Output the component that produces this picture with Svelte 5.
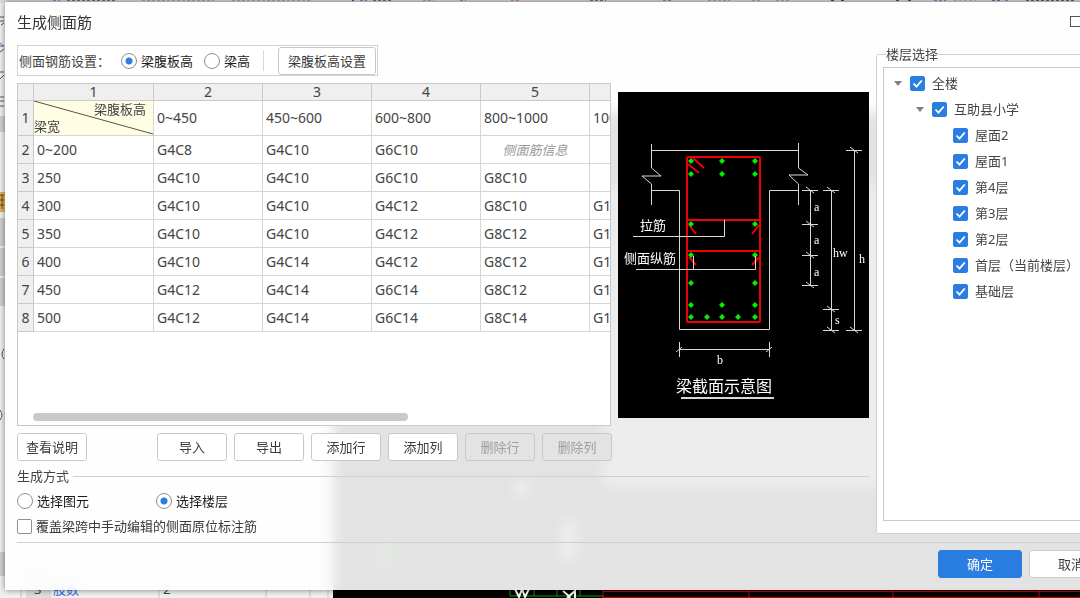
<script lang="ts">
  type Floor = { name: string; level: number; checked: boolean };

  const columns = ['1', '2', '3', '4', '5', '6'];
  const ranges = ['0~450', '450~600', '600~800', '800~1000', '1000~1200'];
  const rows = [
    { width: '0~200', cells: ['G4C8', 'G4C10', 'G6C10', '', ''] },
    { width: '250', cells: ['G4C10', 'G4C10', 'G6C10', 'G8C10', ''] },
    { width: '300', cells: ['G4C10', 'G4C10', 'G4C12', 'G8C10', 'G10C12'] },
    { width: '350', cells: ['G4C10', 'G4C10', 'G4C12', 'G8C12', 'G10C12'] },
    { width: '400', cells: ['G4C10', 'G4C14', 'G4C12', 'G8C12', 'G10C12'] },
    { width: '450', cells: ['G4C12', 'G4C14', 'G6C14', 'G8C12', 'G10C12'] },
    { width: '500', cells: ['G4C12', 'G4C14', 'G6C14', 'G8C14', 'G10C14'] },
  ];

  let floors: Floor[] = $state([
    { name: '全楼', level: 0, checked: true },
    { name: '互助县小学', level: 1, checked: true },
    { name: '屋面2', level: 2, checked: true },
    { name: '屋面1', level: 2, checked: true },
    { name: '第4层', level: 2, checked: true },
    { name: '第3层', level: 2, checked: true },
    { name: '第2层', level: 2, checked: true },
    { name: '首层（当前楼层）', level: 2, checked: true },
    { name: '基础层', level: 2, checked: true },
  ]);

  let heightMode = $state('web');
  let target = $state('floor');
  let override = $state(false);

  const bars = [
    [691, 161], [722, 161], [755, 161],
    [691, 174], [722, 174], [755, 174],
    [691, 224], [755, 224],
    [691, 255], [755, 255],
    [691, 283], [755, 283],
    [691, 305], [722, 305], [755, 305],
    [691, 317], [707, 317], [722, 317], [738, 317], [755, 317],
  ];

  // dimension line ends: x, y
  const ticks = [
    [810, 190], [810, 224], [810, 255], [810, 285],
    [831, 190], [831, 309], [831, 330],
    [854, 150], [854, 330],
  ];

  // toolbar slivers above the dialog: x, width, color
  const marks = [
    [53, 7, '#3a86e0'], [67, 50, '#555'], [142, 72, '#999'], [232, 78, '#999'], [352, 2, '#333'],
    [360, 7, '#3a86e0'], [373, 20, '#555'], [423, 11, '#6a9ddc'], [460, 6, '#3a86e0'], [511, 8, '#d66'],
    [590, 16, '#557'], [663, 8, '#777'], [708, 22, '#999'], [752, 10, '#999'], [776, 14, '#999'],
    [831, 3, '#224'], [841, 3, '#224'], [896, 3, '#333'], [908, 5, '#335'], [934, 12, '#3a86e0'],
    [954, 22, '#9db9dc'], [992, 8, '#557'], [1005, 3, '#3a86e0'], [1026, 50, '#444'],
  ];
</script>

<div class="screen">
  <svg class="workspace" aria-hidden="true">
    <rect width="100%" height="100%" fill="#f1f1f1" />
    <rect y="0" width="100%" height="3" fill="#dcdcdc" />
    {#each marks as [x, w, color]}
      <path d="M{x} 0.5h{w}" stroke={color} stroke-dasharray="3 2" opacity="0.8" />
    {/each}
    <rect y="116" width="5" height="16" fill="#d0d0d0" />
    <rect y="192" width="5" height="20" fill="#e5b25c" />
    <path d="M0 195h4M0 200h4M0 205h4M2 195v14" stroke="#6b4a12" fill="none" />
    <rect y="218" width="5" height="28" fill="#d0d0d0" />
    <rect y="248" width="5" height="28" fill="#d0d0d0" />
    <rect y="278" width="5" height="28" fill="#d0d0d0" />
    <path d="M0 17h4M0 21h4M1 25l3 -2M0 46h4M0 52l4 -3M0 72h4M0 79l4 -4M0 97h4M0 101h4M0 106h4" stroke="#555" fill="none" />
    <path d="M0 43l4 3" stroke="#2d7fe0" />
    <path d="M4 349q-4 5 0 10M0 410q4 5 0 10" stroke="#555" fill="none" />
    <rect y="552" width="5" height="24" fill="#d0d0d0" />
    <rect x="333" y="112" width="100%" height="100%" fill="#000" />
    <rect x="603" y="186" width="100%" height="302" fill="#5c5c5c" />
    <path d="M21 570v28M50 570v28M159 570v28M266 570v28M310 570v28M328 570v28" stroke="#c8c8c8" />
    <rect x="26" y="570" width="24" height="28" fill="#dedede" />
    <text x="34" y="594" fill="#444">3</text>
    <text x="53" y="594" fill="#2d6fe8">肢数</text>
    <text x="163" y="594" fill="#444">2</text>
    <path d="M510 590v6h94M534 590v6M557 590v6M580 590v6" stroke="#00a000" fill="none" />
    <path d="M515 589l4 8l3 -8l3 8l4 -8" stroke="#fff" stroke-width="2" fill="none" />
    <path d="M563 591q10 8 5 6l7 -6v7" stroke="#fff" stroke-width="2" fill="none" />
    <path d="M569 520v42M521 480v16" stroke="#777" stroke-width="14" />
    <path d="M386 545v26" stroke="#008000" stroke-width="8" />
    <path d="M603 591.5h480M603 597.5h480M603 590v8M749 590v8M893 590v8M1039 590v8" stroke="#c80000" fill="none" />
  </svg>

  <main class="dialog">
    <header class="titlebar">
      <h1>生成侧面筋</h1>
      <button class="window-btn" aria-label="最大化">
        <svg width="11" height="11"><rect x="0.5" y="0.5" width="10" height="10" fill="none" stroke="#555" /></svg>
      </button>
      <button class="window-btn" aria-label="关闭">
        <svg width="11" height="11"><path d="M0.5 0.5l10 10M10.5 0.5l-10 10" fill="none" stroke="#555" /></svg>
      </button>
    </header>

    <div class="body">
      <div class="left">
        <div class="settings">
          <span>侧面钢筋设置：</span>
          <label class="option"><input type="radio" name="height" value="web" bind:group={heightMode} />梁腹板高</label>
          <label class="option"><input type="radio" name="height" value="beam" bind:group={heightMode} />梁高</label>
          <i class="divider"></i>
          <button class="btn wide">梁腹板高设置</button>
        </div>

        <div class="sheet-row">
          <div class="sheet">
            <div class="sheet-view">
              <table>
                <colgroup>
                  <col class="col-index" />
                  <col class="col-first" />
                  {#each ranges as _}<col class="col-value" />{/each}
                </colgroup>
                <thead>
                  <tr>
                    <th></th>
                    {#each columns as c}<th scope="col">{c}</th>{/each}
                  </tr>
                </thead>
                <tbody>
                  <tr class="range-row">
                    <th scope="row">1</th>
                    <td class="corner">
                      <div class="corner-box">
                        <svg viewBox="0 0 119 34" preserveAspectRatio="none"><path d="M0 0L119 33" stroke="#55534a" /></svg>
                        <span class="corner-top">梁腹板高</span>
                        <span class="corner-bottom">梁宽</span>
                      </div>
                    </td>
                    {#each ranges as r}<td>{r}</td>{/each}
                  </tr>
                  {#each rows as row, i}
                    <tr>
                      <th scope="row">{i + 2}</th>
                      <td>{row.width}</td>
                      {#each row.cells as cell, j}
                        {#if i === 0 && j === 3}
                          <td class="hint">侧面筋信息</td>
                        {:else}
                          <td>{cell}</td>
                        {/if}
                      {/each}
                    </tr>
                  {/each}
                </tbody>
              </table>
            </div>
            <div class="scrollbar"><div class="thumb"></div></div>
          </div>

          <svg class="diagram" viewBox="618 92 251 326" role="img" aria-label="梁截面示意图">
            <g class="line">
              <path d="M651 150.5H798M651.5 144V168L661 176H642L651.5 184V205M798.5 143V168L808 175H789L798.5 184V205" />
              <path d="M651 190.5H679.5V329.5H769.5V190.5H798" />
              <path d="M810.5 190V286M831.5 190V330M854.5 150V330M679 349.5H769M679.5 342V357M769.5 342V357" />
              <path d="M676 352L682 347M766 352L772 347" />
              {#each ticks as [x, y]}
                <path d="M{x - 8} {y + 0.5}h16M{x - 4} {y - 3}l8 6" />
              {/each}
            </g>
            <g class="bar">
              <rect x="687" y="157" width="73" height="165" rx="1" />
              <path d="M687 220H760M687 251H760" />
              <path d="M688 164L699 173M693 158L704 168M689 225L696 234M759 225L752 234M689 257L696 265M759 257L752 265" />
            </g>
            {#each bars as [x, y]}
              <path class="dot" d="M{x - 3} {y}l3 -3l3 3l-3 3z" />
            {/each}
            <g class="line">
              <path d="M633 236.5H724.5V220M636 269.5H755.5V256M693.5 256V269" />
              <path d="M681 398H774" stroke-width="2" />
            </g>
            <text x="640" y="230">拉筋</text>
            <text x="624" y="263">侧面纵筋</text>
            <text class="caption" x="676" y="392">梁截面示意图</text>
            <g class="dim">
              <text x="814" y="211">a</text>
              <text x="814" y="244">a</text>
              <text x="814" y="276">a</text>
              <text x="833" y="257">hw</text>
              <text x="835" y="324">s</text>
              <text x="859" y="263">h</text>
              <text x="717" y="364">b</text>
            </g>
          </svg>
        </div>

        <div class="actions">
          <button class="btn help">查看说明</button>
          <button class="btn">导入</button>
          <button class="btn">导出</button>
          <button class="btn">添加行</button>
          <button class="btn">添加列</button>
          <button class="btn" disabled>删除行</button>
          <button class="btn" disabled>删除列</button>
        </div>

        <fieldset class="mode">
          <legend>生成方式</legend>
          <div class="mode-options">
            <label class="option"><input type="radio" name="target" value="element" bind:group={target} />选择图元</label>
            <label class="option"><input type="radio" name="target" value="floor" bind:group={target} />选择楼层</label>
          </div>
          <label class="option soft"><input type="checkbox" bind:checked={override} />覆盖梁跨中手动编辑的侧面原位标注筋</label>
        </fieldset>
      </div>

      <fieldset class="floors">
        <legend>楼层选择</legend>
        <ul class="tree">
          {#each floors as floor}
            <li class="level-{floor.level}">
              {#if floor.level < 2}
                <svg class="arrow" width="8" height="5"><path d="M0 0H8L4 5z" fill="#808080" /></svg>
              {/if}
              <label><input type="checkbox" bind:checked={floor.checked} />{floor.name}</label>
            </li>
          {/each}
        </ul>
      </fieldset>
    </div>

    <footer>
      <button class="btn ok">确定</button>
      <button class="btn cancel">取消</button>
    </footer>
  </main>
</div>

<style>
  :global(body) {
    margin: 0;
  }

  .screen {
    position: relative;
    box-sizing: border-box;
    min-height: 100vh;
    padding: 2px 0 8px 5px;
    overflow: hidden;
    font-family: 'Noto Sans', 'Noto Sans CJK SC', sans-serif;
    font-size: 13px;
    line-height: 18px;
    color: #444;
  }

  .workspace {
    position: absolute;
    top: 0;
    left: 0;
    width: 100%;
    height: 100%;
  }

  /* the dialog runs past the right edge of the screen */
  .dialog {
    position: relative;
    margin-right: -45px;
    padding: 0 12px;
    background: rgba(255, 255, 255, 0.89);
    backdrop-filter: blur(7px);
    box-shadow: 0 0 6px rgba(0, 0, 0, 0.5);
  }

  .titlebar {
    display: flex;
    align-items: center;
    gap: 21px;
    height: 39px;
    padding-bottom: 4px;
  }

  h1 {
    flex: 1;
    margin: 0;
    font-size: 15px;
    font-weight: 400;
    color: #333;
  }

  .window-btn {
    display: flex;
    padding: 0;
    border: none;
    background: none;
  }

  .body {
    display: flex;
    gap: 7px;
    padding-bottom: 7px;
  }

  .left {
    flex: 1;
    min-width: 0;
    display: flex;
    flex-direction: column;
    align-items: stretch;
  }

  fieldset {
    margin: 0;
    min-width: 0;
    border: 1px solid #d0d0d0;
  }

  legend {
    padding: 0;
  }

  .settings {
    display: flex;
    align-items: center;
    align-self: flex-start;
    box-sizing: border-box;
    height: 31px;
    margin-bottom: 7px;
    padding: 0 1px;
    border: 1px solid #d0d4d8;
    background: #fff;
  }

  .settings .option {
    margin-left: 11px;
  }

  .divider {
    width: 1px;
    height: 21px;
    margin: 0 14px 0 13px;
    background: #d8d8d8;
  }

  .option {
    display: flex;
    align-items: center;
    gap: 4px;
    color: #1c1c1c;
  }

  .option.soft {
    color: #3a3a3a;
  }

  input {
    appearance: none;
    flex: none;
    box-sizing: border-box;
    width: 15px;
    height: 15px;
    margin: 0;
    border: 1px solid #8f8f8f;
    border-radius: 2px;
    background: #fff;
  }

  input[type='radio'] {
    width: 16px;
    height: 16px;
    border-radius: 50%;
  }

  input[type='radio']:checked {
    background: radial-gradient(circle, #2a7de1 3px, #fff 4px);
  }

  input[type='checkbox']:checked {
    border-color: #2a7de1;
    background: #2a7de1
      url("data:image/svg+xml,%3Csvg xmlns='http://www.w3.org/2000/svg' viewBox='0 0 13 13'%3E%3Cpath d='M2.5 6.5l3 3.2L10.8 3.5' fill='none' stroke='white' stroke-width='1.8'/%3E%3C/svg%3E");
  }

  .btn {
    box-sizing: border-box;
    width: 70px;
    height: 28px;
    padding: 0;
    border: 1px solid #c9c9c9;
    border-radius: 3px;
    background: #fff;
    font: inherit;
    color: #3c3c3c;
    white-space: nowrap;
  }

  .btn.wide {
    width: 98px;
  }

  .btn:disabled {
    background: #e3e3e3;
    color: #a0a0a0;
  }

  .sheet-row {
    display: flex;
    align-items: center;
    gap: 7px;
  }

  .sheet {
    flex: 1;
    min-width: 0;
    box-sizing: border-box;
    display: flex;
    flex-direction: column;
    height: 343px;
    border: 1px solid #c9c9c9;
    background: #fff;
  }

  .sheet-view {
    flex: 1;
    overflow: hidden;
  }

  table {
    width: 681px;
    table-layout: fixed;
    border-collapse: separate;
    border-spacing: 0;
    font-size: 14px;
  }

  .col-index {
    width: 16px;
  }

  .col-first {
    width: 120px;
  }

  .col-value {
    width: 109px;
  }

  th,
  td {
    box-sizing: border-box;
    height: 28px;
    padding: 0 3px;
    border-right: 1px solid #d6d6d6;
    border-bottom: 1px solid #d6d6d6;
    font-weight: 400;
    text-align: left;
    white-space: nowrap;
  }

  th {
    padding: 0;
    border-color: #c9c9c9;
    background: #efefef;
    text-align: center;
  }

  thead th {
    height: 17px;
    line-height: 16px;
  }

  .range-row th,
  .range-row td {
    height: 35px;
  }

  td.corner {
    padding: 0;
    background: #fffde4;
    font-size: 13px;
  }

  .corner-box {
    display: flex;
    flex-direction: column;
    position: relative;
    height: 34px;
    line-height: 17px;
  }

  .corner-box svg {
    position: absolute;
    width: 100%;
    height: 100%;
  }

  .corner-top {
    align-self: flex-end;
    padding-right: 7px;
  }

  .hint {
    font-size: 13px;
    font-style: italic;
    color: #999;
    text-align: center;
  }

  .scrollbar {
    padding: 0 0 4px 15px;
  }

  .thumb {
    width: 65%;
    height: 8px;
    border-radius: 4px;
    background: #c9c9c9;
  }

  .diagram {
    flex: none;
    width: 251px;
    height: 326px;
    background: #000;
    font-size: 13px;
  }

  .diagram text {
    fill: #fff;
  }

  .diagram .caption {
    font-size: 16px;
  }

  .diagram .dim {
    font-family: 'Liberation Serif', serif;
    font-size: 12px;
  }

  .line {
    fill: none;
    stroke: #d8d8d8;
  }

  .bar {
    fill: none;
    stroke: #f00000;
    stroke-width: 2;
  }

  .dot {
    fill: #00f000;
  }

  .actions {
    display: flex;
    gap: 7px;
    margin: 7px 0 6px;
  }

  .help {
    margin-right: 63px;
  }

  .mode {
    padding: 0;
    border-width: 1px 0 0;
  }

  .mode legend {
    padding-right: 4px;
  }

  .mode-options {
    display: flex;
    margin: 7px 0;
  }

  .mode-options .option {
    width: 139px;
  }

  .floors {
    flex: none;
    display: flex;
    width: 237px;
    margin-bottom: 1px;
    padding: 4px 6px 12px;
    border-radius: 3px;
    background: #fff;
    box-sizing: border-box;
  }

  .floors legend {
    margin-left: 3px;
  }

  .tree {
    flex: 1;
    box-sizing: border-box;
    margin: 0;
    padding: 2px 0;
    border: 1px solid #c9c9c9;
    list-style: none;
  }

  .tree li {
    display: flex;
    align-items: center;
    gap: 8px;
    height: 26px;
  }

  .tree label {
    display: flex;
    align-items: center;
    gap: 7px;
    white-space: nowrap;
  }

  .level-0 {
    padding-left: 10px;
  }

  .level-1 {
    padding-left: 32px;
  }

  .level-2 {
    padding-left: 69px;
  }

  footer {
    display: flex;
    justify-content: flex-end;
    gap: 7px;
    padding: 7px 0 12px;
    border-top: 1px solid #cfcfcf;
  }

  footer .btn {
    width: 84px;
  }

  .ok {
    border-color: #2a7de1;
    background: #2a7de1;
    color: #fff;
  }
</style>
